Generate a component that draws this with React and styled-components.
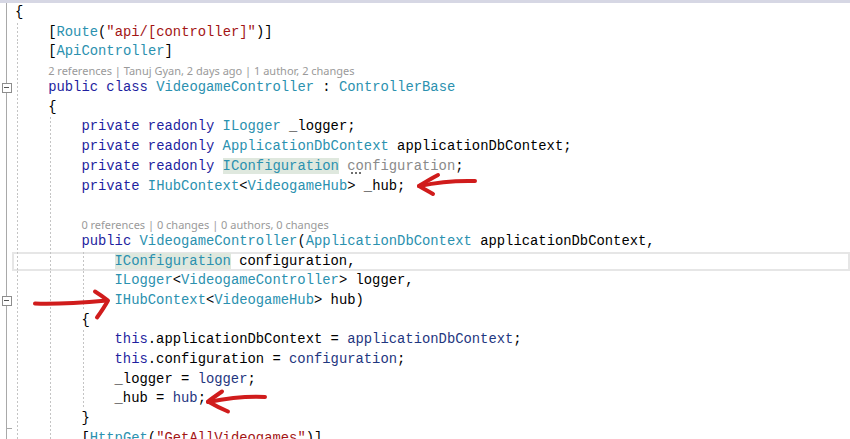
import React from "react";
import styled, { createGlobalStyle, css } from "styled-components";

const GlobalStyle = createGlobalStyle`
  html, body {
    margin: 0;
    padding: 0;
    background: #ffffff;
    overflow: hidden;
  }
`;

const LINE_H = 19.7;
const LENS_H = 16;
const INDENT_W = 33.2;

const Page = styled.div`
  position: relative;
  width: 850px;
  height: 439px;
  overflow: hidden;
  background: #ffffff;
`;

const TopRule = styled.div`
  height: 3px;
  background: #d6d7e4;
`;

const Row = styled.div`
  display: flex;
  height: ${(p) => p.$h}px;
`;

const Gutter = styled.div`
  position: relative;
  flex: none;
  width: 12px;
  display: flex;
  align-items: center;
  justify-content: center;
  background: linear-gradient(#a9a9a9, #a9a9a9) no-repeat 5.5px 0 / 1px 100%;
  ${(p) =>
    p.$end &&
    css`
      &::after {
        content: "";
        position: absolute;
        left: 6px;
        bottom: 0;
        width: 6px;
        height: 1px;
        background: #a9a9a9;
      }
    `}
`;

const FoldBox = styled.span`
  box-sizing: border-box;
  width: 10px;
  height: 10px;
  margin-left: 1px;
  border: 1px solid #8d8d8d;
  background: #ffffff;
  display: flex;
  align-items: center;
  justify-content: center;
  &::before {
    content: "";
    width: 5px;
    height: 1px;
    background: #555555;
  }
`;

const Code = styled.div`
  flex: 1;
  display: flex;
  align-items: stretch;
  padding-left: 3px;
  ${(p) =>
    p.$current &&
    css`
      box-shadow: inset 0 0 0 2px #e6e6e6;
    `}
`;

const Indent = styled.span`
  flex: none;
  width: ${INDENT_W}px;
  background: repeating-linear-gradient(
      to bottom,
      #c4c4c4 0 2px,
      transparent 2px 4px
    )
    no-repeat 2px 0 / 1px 100%;
`;

const Line = styled.span`
  display: block;
  white-space: pre;
  font-family: "Liberation Mono", "DejaVu Sans Mono", monospace;
  font-size: 13.85px;
  line-height: ${LINE_H}px;
  color: #000000;
`;

const LensText = styled.span`
  display: block;
  white-space: pre;
  font-family: "Noto Sans", "Open Sans", sans-serif;
  font-size: 11px;
  line-height: 17px;
  color: #9a9a9a;
`;

const colors = {
  p: "#000000",
  k: "#1f1fa0",
  t: "#2b91af",
  s: "#a31515",
  v: "#1f377f",
  f: "#8a8a8a",
};

const Tok = styled.span`
  color: ${(p) => colors[p.$kind] || "#000"};
  ${(p) =>
    p.$hl &&
    css`
      background: #dfe8de;
    `}
  ${(p) =>
    p.$kind === "f" &&
    css`
      position: relative;
      &::after {
        content: "";
        position: absolute;
        left: 3px;
        bottom: 0px;
        width: 11px;
        height: 2px;
        background-image: radial-gradient(circle, #6f6f6f 0.8px, transparent 1.1px);
        background-size: 4px 2px;
      }
    `}
`;

const rows = [
  { level: 0, toks: [["p", "{"]] },
  {
    level: 1,
    toks: [["p", "["], ["t", "Route"], ["p", "("], ["s", '"api/[controller]"'], ["p", ")]"]],
  },
  { level: 1, toks: [["p", "["], ["t", "ApiController"], ["p", "]"]] },
  { level: 1, lens: "2 references | Tanuj Gyan, 2 days ago | 1 author, 2 changes" },
  {
    level: 1,
    fold: "box",
    toks: [["k", "public class "], ["t", "VideogameController"], ["p", " : "], ["t", "ControllerBase"]],
  },
  { level: 1, toks: [["p", "{"]] },
  { level: 2, toks: [["k", "private readonly "], ["t", "ILogger"], ["p", " _logger;"]] },
  {
    level: 2,
    toks: [["k", "private readonly "], ["t", "ApplicationDbContext"], ["p", " applicationDbContext;"]],
  },
  {
    level: 2,
    toks: [["k", "private readonly "], ["t", "IConfiguration", true], ["p", " "], ["f", "configuration"], ["p", ";"]],
  },
  {
    level: 2,
    toks: [["k", "private "], ["t", "IHubContext"], ["p", "<"], ["t", "VideogameHub"], ["p", "> _hub;"]],
  },
  { level: 2, toks: [] },
  { level: 2, lens: "0 references | 0 changes | 0 authors, 0 changes" },
  {
    level: 2,
    toks: [["k", "public "], ["t", "VideogameController"], ["p", "("], ["t", "ApplicationDbContext"], ["p", " applicationDbContext,"]],
  },
  { level: 3, current: true, toks: [["t", "IConfiguration", true], ["p", " configuration,"]] },
  {
    level: 3,
    toks: [["t", "ILogger"], ["p", "<"], ["t", "VideogameController"], ["p", "> logger,"]],
  },
  {
    level: 3,
    fold: "box",
    toks: [["t", "IHubContext"], ["p", "<"], ["t", "VideogameHub"], ["p", "> hub)"]],
  },
  { level: 2, toks: [["p", "{"]] },
  {
    level: 3,
    toks: [["k", "this"], ["p", ".applicationDbContext = "], ["v", "applicationDbContext"], ["p", ";"]],
  },
  {
    level: 3,
    toks: [["k", "this"], ["p", ".configuration = "], ["v", "configuration"], ["p", ";"]],
  },
  { level: 3, toks: [["p", "_logger = "], ["v", "logger"], ["p", ";"]] },
  { level: 3, toks: [["p", "_hub = "], ["v", "hub"], ["p", ";"]] },
  { level: 2, fold: "end", toks: [["p", "}"]] },
  {
    level: 2,
    toks: [["p", "["], ["t", "HttpGet"], ["p", "("], ["s", '"GetAllVideogames"'], ["p", ")]"]],
  },
];

const Overlay = styled.svg`
  position: absolute;
  left: 0;
  top: 0;
  width: 850px;
  height: 439px;
  pointer-events: none;
`;

const Stroke = styled.path`
  fill: none;
  stroke: #d01c1c;
  stroke-width: 4;
  stroke-linecap: round;
  stroke-linejoin: round;
`;

function Arrows() {
  return (
    <Overlay viewBox="0 0 850 439">
      <Stroke d="M475 181 C458 180.5 438 182 419 186" />
      <Stroke d="M438 175 C430 179 424 183 419 186 C424 189 428 191 433 194" />
      <Stroke d="M35 303.5 C58 304.5 84 302.5 107 300.5" />
      <Stroke d="M95 291.5 C99 294 104 297.5 108 300.5 C105 306 101 312 97 317.5" />
      <Stroke d="M265 397 C246 396 226 398.5 208 402" />
      <Stroke d="M222 391.5 C217 395 212 398.5 208 401.5 C214 405 221 408.5 228 411.5" />
    </Overlay>
  );
}

export default function App() {
  return (
    <Page>
      <GlobalStyle />
      <TopRule />
      {rows.map((r, i) => {
        const indents = Array.from({ length: r.level }, (_, k) => <Indent key={k} />);
        return (
          <Row key={i} $h={r.lens ? LENS_H : LINE_H}>
            <Gutter $end={r.fold === "end"}>{r.fold === "box" && <FoldBox />}</Gutter>
            <Code $current={r.current}>
              {indents}
              {r.lens ? (
                <LensText>{r.lens}</LensText>
              ) : (
                <Line>
                  {r.toks.map(([kind, text, hl], j) => (
                    <Tok key={j} $kind={kind} $hl={hl}>
                      {text}
                    </Tok>
                  ))}
                </Line>
              )}
            </Code>
          </Row>
        );
      })}
      <Arrows />
    </Page>
  );
}
